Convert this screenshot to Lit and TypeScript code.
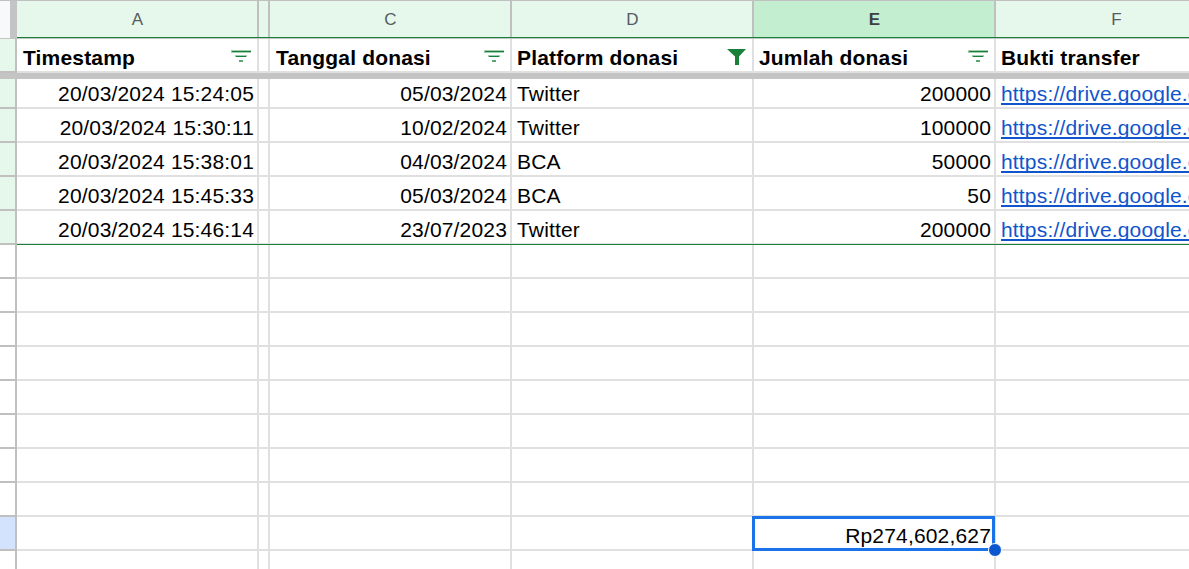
import { LitElement, html, css, nothing } from "lit";
import { customElement } from "lit/decorators.js";
import { classMap } from "lit/directives/class-map.js";

interface Column {
  letter: string;
  title: string;
  filter?: "lines" | "funnel";
  right?: boolean;
  link?: boolean;
  active?: boolean;
}

const COLUMNS: Column[] = [
  { letter: "A", title: "Timestamp", filter: "lines", right: true },
  { letter: "", title: "" },
  { letter: "C", title: "Tanggal donasi", filter: "lines", right: true },
  { letter: "D", title: "Platform donasi", filter: "funnel" },
  { letter: "E", title: "Jumlah donasi", filter: "lines", right: true, active: true },
  { letter: "F", title: "Bukti transfer", link: true },
];

const LINK = "https://drive.google.c";

const ROWS: string[][] = [
  ["20/03/2024 15:24:05", "", "05/03/2024", "Twitter", "200000", LINK],
  ["20/03/2024 15:30:11", "", "10/02/2024", "Twitter", "100000", LINK],
  ["20/03/2024 15:38:01", "", "04/03/2024", "BCA", "50000", LINK],
  ["20/03/2024 15:45:33", "", "05/03/2024", "BCA", "50", LINK],
  ["20/03/2024 15:46:14", "", "23/07/2023", "Twitter", "200000", LINK],
  ...Array.from({ length: 8 }, () => ["", "", "", "", "", ""]),
  ["", "", "", "", "Rp274,602,627", ""],
  ["", "", "", "", "", ""],
];

const LAST_DATA_ROW = 4;
const TOTAL_ROW = 13;

@customElement("app-root")
export class AppRoot extends LitElement {
  static styles = css`
    :host {
      display: block;
      width: 100%;
      height: 569px;
      overflow: hidden;
      background: #fff;
      color: #000;
      font-family: "Liberation Sans", Arial, sans-serif;
      font-size: 21px;
    }
    .row {
      display: grid;
      grid-template-columns: 17px 242px 11px 242px 242px 242px 242px;
      height: 34px;
    }
    .row > * {
      box-sizing: border-box;
      min-width: 0;
    }
    .letters {
      height: 39px;
      border-top: 1px solid #c0c0c0;
      box-sizing: border-box;
    }
    .corner {
      background: #f8f9fa;
      border-right: 7px solid #c4c4c4;
      border-bottom: 1px solid #c4c4c4;
    }
    .letter {
      display: flex;
      align-items: center;
      justify-content: center;
      position: relative;
      background: #e6f8ec;
      border-right: 2px solid #c0c0c0;
      border-bottom: 1px solid #c4c4c4;
      padding-left: 1px;
      color: #575b5f;
      font-size: 17px;
    }
    .letter.active {
      background: #c4eed0;
      color: #3c4043;
      font-weight: bold;
    }
    .letter::after,
    .edge .cell::after {
      content: "";
      position: absolute;
      left: 0;
      right: -2px;
      bottom: 0;
      height: 1px;
      background: #188038;
      z-index: 1;
    }
    .freeze {
      height: 6px;
      background: #c4c4c4;
    }
    .gutter {
      border-right: 2px solid #c0c0c0;
      border-bottom: 2px solid #c0c0c0;
    }
    .gutter.green {
      background: #e6f8ec;
    }
    .gutter.blue {
      background: #d3e3fd;
    }
    .cell {
      display: flex;
      align-items: flex-end;
      border-right: 2px solid #e0e0e0;
      border-bottom: 2px solid #e0e0e0;
      padding: 0 4px 0 5px;
      white-space: nowrap;
      line-height: 26px;
      letter-spacing: 0.17px;
      position: relative;
    }
    .short {
      height: 30px;
    }
    .right {
      justify-content: flex-end;
      padding-right: 3px;
    }
    .head .cell {
      justify-content: space-between;
      font-weight: bold;
      padding: 0 5px 0 5px;
    }
    .head .first {
      padding-left: 6px;
    }
    .row .narrow,
    .head .narrow {
      padding: 0;
    }
    .edge .cell::after {
      bottom: -2px;
    }
    .link {
      color: #1155cc;
    }
    .link span {
      box-sizing: border-box;
      height: 24px;
      border-bottom: 2px solid #1155cc;
      margin-bottom: 2px;
    }
    .icon {
      width: 22px;
      height: 26px;
      display: block;
    }
    .selection {
      position: absolute;
      left: -2px;
      top: -1px;
      width: 237px;
      height: 29px;
      border: 3px solid #1a73e8;
    }
    .handle {
      position: absolute;
      right: -10px;
      bottom: -9px;
      width: 12px;
      height: 12px;
      border-radius: 50%;
      background: #0b57d0;
      border: 1px solid #fff;
      z-index: 1;
    }
    .selected {
      z-index: 1;
    }
  `;

  private icon(kind: Column["filter"]) {
    if (kind === "funnel") {
      return html`<svg class="icon" viewBox="0 0 22 26">
        <path d="M2 4H21L14 11.5V20H10V11.5Z" fill="#188038" />
      </svg>`;
    }
    if (kind === "lines") {
      return html`<svg class="icon" viewBox="0 0 22 26" fill="#188038">
        <rect x="1" y="5" width="20" height="3" opacity="0.4" />
        <rect x="2" y="6" width="19" height="1" />
        <rect x="5" y="10" width="12" height="2" opacity="0.4" />
        <rect x="6" y="11" width="10" height="1" />
        <rect x="9" y="15" width="4" height="2" opacity="0.7" />
      </svg>`;
    }
    return nothing;
  }

  render() {
    return html`
      <div class="row letters">
        <div class="corner"></div>
        ${COLUMNS.map(
          (c) => html`<div class=${classMap({ letter: true, active: !!c.active })}>${c.letter}</div>`
        )}
      </div>
      <div class="row head">
        <div class="gutter green"></div>
        ${COLUMNS.map(
          (c, i) => html`<div class=${classMap({ cell: true, first: i === 0 || i === 2, narrow: i === 1 })}>
            <span>${c.title}</span>${this.icon(c.filter)}
          </div>`
        )}
      </div>
      <div class="freeze"></div>
      ${ROWS.map(
        (row, r) => html`<div class=${classMap({ row: true, short: r === 0, edge: r === LAST_DATA_ROW })}>
          <div
            class=${classMap({ gutter: true, green: r <= LAST_DATA_ROW, blue: r === TOTAL_ROW })}
          ></div>
          ${row.map((text, i) => {
            const c = COLUMNS[i];
            const selected = r === TOTAL_ROW && !!c.active;
            return html`<div
              class=${classMap({
                cell: true,
                right: !!c.right,
                link: !!c.link && text !== "",
                narrow: i === 1,
                selected,
              })}
            >
              ${text ? html`<span>${text}</span>` : nothing}
              ${selected ? html`<div class="selection"><div class="handle"></div></div>` : nothing}
            </div>`;
          })}
        </div>`
      )}
    `;
  }
}
